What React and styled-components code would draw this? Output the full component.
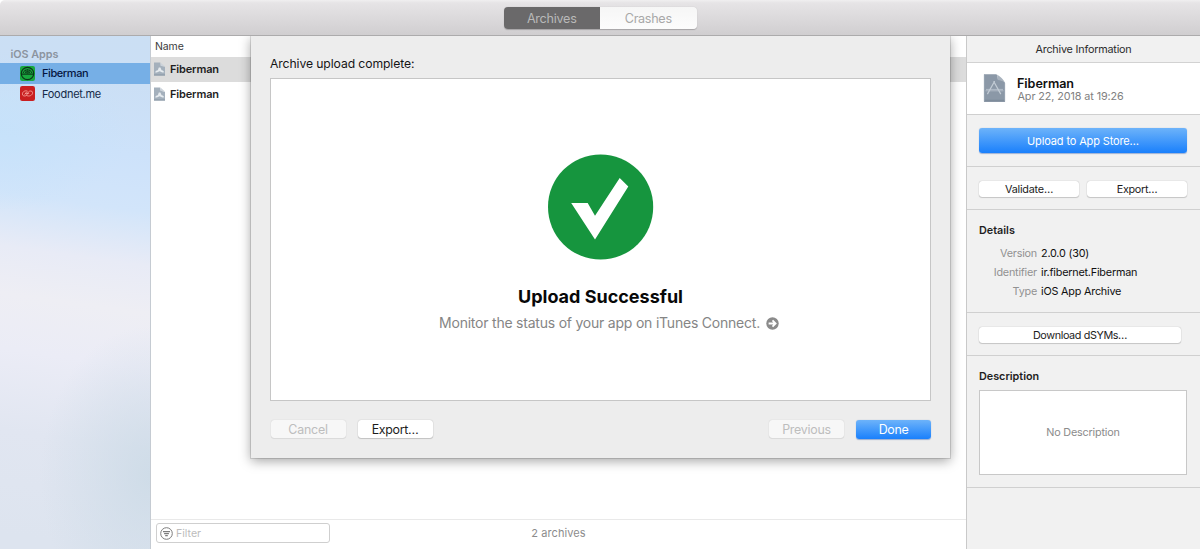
import React from "react";
import styled, { createGlobalStyle, css } from "styled-components";

const GlobalStyle = createGlobalStyle`
  * { box-sizing: border-box; }
  body {
    margin: 0;
    font-family: Inter, "Liberation Sans", sans-serif;
    font-size: 11px;
    color: #1e1e1e;
    overflow: hidden;
  }
  button, input { font-family: inherit; margin: 0; }
`;

const Window = styled.div`
  position: relative;
  width: 1200px;
  height: 549px;
  display: flex;
  flex-direction: column;
  background: #fff;
  overflow: hidden;
`;

const Toolbar = styled.header`
  height: 36px;
  flex: none;
  display: flex;
  justify-content: center;
  padding-top: 7px;
  background: linear-gradient(#f0eff0 0, #e6e4e6 3px, #d0ced0 100%);
  border-bottom: 1px solid #acabac;
  border-top-left-radius: 5px;
`;

const Segments = styled.div`
  display: flex;
  width: 193px;
  height: 22px;
  border-radius: 4px;
  overflow: hidden;
  box-shadow: 0 0.5px 1px rgba(0, 0, 0, 0.22);
`;

const Segment = styled.button`
  flex: 1;
  border: 0;
  padding: 0;
  font-size: 12.6px;
  letter-spacing: ${(p) => p.$spacing || 0}px;
  color: ${(p) => (p.$active ? "#b9b9b9" : "#a8a8a8")};
  background: ${(p) => (p.$active ? "#6a696a" : "linear-gradient(#f6f6f6, #fcfcfc)")};
`;

const Body = styled.div`
  flex: 1;
  display: flex;
  min-height: 0;
`;

const Sidebar = styled.aside`
  width: 151px;
  flex: none;
  padding-top: 11px;
  border-right: 1px solid #c5cbd2;
  background:
    radial-gradient(ellipse 110px 150px at 150px 440px, rgba(205, 219, 231, 0.9), rgba(205, 219, 231, 0) 100%),
    radial-gradient(ellipse 130px 80px at 0 95px, rgba(196, 226, 250, 0.75), rgba(196, 226, 250, 0) 100%),
    linear-gradient(188deg, #cbdff4 0, #cbdff5 50px, #cde2fa 120px, #d2e5fa 175px, #e8ebf6 228px, #eeeef4 275px, #ebecf6 330px, #e1e6f1 410px, #dde4ef 513px);
`;

const GroupTitle = styled.div`
  height: 16px;
  padding-left: 10.5px;
  line-height: 15px;
  font-size: 10.8px;
  font-weight: 600;
  letter-spacing: -0.02px;
  color: #8b949f;
`;

const AppItem = styled.div`
  height: 20.5px;
  display: flex;
  align-items: center;
  gap: 7px;
  padding-left: 20px;
  font-size: 11px;
  letter-spacing: ${(p) => p.$spacing || 0}px;
  font-weight: ${(p) => (p.$selected ? 500 : 400)};
  color: ${(p) => (p.$selected ? "#05153f" : "#152a49")};
  background: ${(p) => (p.$selected ? "#76afe6" : "transparent")};
  svg { flex: none; }
`;

const Archives = styled.main`
  flex: 1;
  display: flex;
  flex-direction: column;
  min-width: 0;
`;

const ColumnHeader = styled.div`
  height: 21px;
  padding-left: 4px;
  line-height: 21px;
  font-size: 10.5px;
  letter-spacing: -0.1px;
  color: #3c3c3c;
`;

const ArchiveRow = styled.div`
  height: 24.5px;
  display: flex;
  align-items: center;
  gap: 5px;
  padding-left: 3px;
  font-size: 11px;
  font-weight: 600;
  letter-spacing: -0.15px;
  background: ${(p) => (p.$selected ? "#dcdcdc" : "#fff")};
  svg { flex: none; }
`;

const Footer = styled.footer`
  margin-top: auto;
  height: 30px;
  border-top: 1px solid #e9e9e9;
  padding: 3px 5px 0;
  display: grid;
  grid-template-columns: 174px 1fr 174px;
`;

const FilterField = styled.label`
  height: 20px;
  display: flex;
  align-items: center;
  gap: 3px;
  padding-left: 3px;
  border: 1px solid #cfcfcf;
  border-radius: 3px;
  font-size: 10.6px;
  color: #bcbcbc;
`;

const Count = styled.span`
  text-align: center;
  line-height: 21px;
  font-size: 11px;
  letter-spacing: 0.1px;
  color: #8c8c8c;
`;

const Inspector = styled.aside`
  width: 234px;
  flex: none;
  border-left: 1px solid #c9c9c9;
  background: #f1f1f1;
`;

const PanelTitle = styled.div`
  height: 27px;
  border-bottom: 1px solid #d2d2d2;
  text-align: center;
  line-height: 27px;
  font-size: 10.8px;
  letter-spacing: -0.2px;
  color: #2c2c2c;
`;

const Summary = styled.section`
  height: 52px;
  display: flex;
  align-items: center;
  gap: 11px;
  padding: 0 16px;
  background: #fff;
  border-bottom: 1px solid #cfcfcf;
`;

const SummaryText = styled.div`
  padding-top: 2px;
`;

const SummaryName = styled.div`
  font-size: 12.6px;
  font-weight: 600;
  line-height: 13px;
  letter-spacing: -0.05px;
  color: #111;
`;

const SummaryDate = styled.div`
  padding-left: 0.5px;
  font-size: 10.8px;
  line-height: 13px;
  letter-spacing: -0.09px;
  color: #808080;
`;

const Section = styled.section`
  height: ${(p) => p.$height}px;
  padding: ${(p) => p.$top}px 12px 0;
  border-bottom: 1px solid #d0d0d0;
`;

const ButtonPair = styled.div`
  display: flex;
  gap: 8px;
`;

const blue = css`
  color: #fff;
  background: linear-gradient(#6db3fa, #1a80fc);
  box-shadow: 0 0.5px 1px rgba(0, 60, 160, 0.35);
`;

const PushButton = styled.button`
  flex: none;
  width: ${(p) => p.$width}px;
  height: ${(p) => p.$height || 16}px;
  padding: ${(p) => p.$shift || 0}px 0 0;
  border: 0;
  border-radius: 3px;
  font-size: ${(p) => p.$size || 10.8}px;
  line-height: ${(p) => (p.$height || 16) - (p.$shift || 0)}px;
  letter-spacing: ${(p) => p.$spacing || 0}px;
  color: #1c1c1c;
  background: #fff;
  box-shadow: 0 0 1px rgba(0, 0, 0, 0.35), 0 1px 1px rgba(0, 0, 0, 0.15);
  ${(p) => p.$primary && blue}
  &:disabled {
    color: #bdbdbd;
    background: #f7f7f7;
    box-shadow: 0 0 1px rgba(0, 0, 0, 0.22), 0 1px 1px rgba(0, 0, 0, 0.06);
  }
`;

const SectionTitle = styled.h3`
  margin: 0;
  font-size: 10.8px;
  line-height: 14px;
  font-weight: 600;
`;

const Facts = styled.dl`
  margin: 6px 0 0;
  display: grid;
  grid-template-columns: 58px 1fr;
  column-gap: 4px;
  grid-auto-rows: 19px;
  line-height: 19px;
  font-size: 10.8px;
  letter-spacing: -0.2px;
  dt { text-align: right; color: #929292; }
  dd { margin: 0; color: #101010; }
`;

const DescriptionBox = styled.div`
  margin-top: 6px;
  height: 85px;
  width: 208px;
  display: flex;
  align-items: center;
  justify-content: center;
  background: #fff;
  border: 1px solid #c8c8c8;
  font-size: 10.8px;
  letter-spacing: -0.18px;
  color: #8b8b8b;
`;

const Sheet = styled.div`
  position: absolute;
  left: 251px;
  top: 36px;
  width: 699px;
  height: 422px;
  padding: 18px 19px 0;
  background: #ededed;
  box-shadow: 0 0 0 1px rgba(0, 0, 0, 0.12), 0 3px 11px rgba(0, 0, 0, 0.36);
  clip-path: inset(0 -24px -30px -24px);
`;

const SheetTitle = styled.div`
  height: 24px;
  line-height: 19px;
  font-size: 12.2px;
  letter-spacing: -0.1px;
  color: #151515;
`;

const Result = styled.div`
  height: 323px;
  display: flex;
  flex-direction: column;
  align-items: center;
  padding-top: 75px;
  border: 1px solid #c6c6c6;
  background: #fff;
`;

const ResultTitle = styled.h1`
  margin: 23px 0 0;
  font-size: 18px;
  line-height: 27px;
  font-weight: 650;
  color: #080808;
`;

const ResultLink = styled.p`
  margin: 3px 0 0;
  padding-left: 17px;
  display: flex;
  align-items: center;
  gap: 6px;
  font-size: 14px;
  line-height: 20px;
  letter-spacing: -0.22px;
  color: #858585;
`;

const SheetActions = styled.div`
  display: flex;
  gap: 12px;
  padding: 19px 0 0 0.5px;
`;

const Spacer = styled.div`
  flex: 1;
`;

const FibermanIcon = () => (
  <svg width="15" height="15" viewBox="0 0 15 15" fill="none">
    <rect width="15" height="15" rx="2.2" fill="#18a83e" />
    <circle cx="7.5" cy="7.5" r="6.2" stroke="#0b3518" strokeWidth="1.2" />
    <path d="M1.8 8.2h11.4" stroke="#0b3518" strokeWidth="1" />
    <path d="M3 7.4a4.6 4.6 0 0 1 9 0M4.9 7.6a2.7 2.7 0 0 1 5.2 0" stroke="#0b3518" strokeWidth=".9" />
    <path d="M7.5 3v5M5.3 3.6l1.2 4M9.7 3.6l-1.2 4" stroke="#0b3518" strokeWidth=".6" />
  </svg>
);

const FoodnetIcon = () => (
  <svg width="15" height="15" viewBox="0 0 15 15" fill="none">
    <rect width="15" height="15" rx="2.2" fill="#c91f20" />
    <g stroke="#f7a8a0" strokeWidth=".8">
      <path d="M7.6 5.2C5.5 4 2.4 5.6 2.4 8c0 2.2 2.6 2.6 4.2 1.3" />
      <path d="M7 9.6c2.2 1.2 5.6-.4 5.6-2.8 0-2.2-3-2.4-4.3-.7L6.2 9.8" />
      <path d="M4.6 8.6 6.9 5.6M5.2 7.4h4" />
    </g>
  </svg>
);

const SmallArchiveIcon = () => (
  <svg width="11" height="14" viewBox="0 0 11 14">
    <path d="M0 .5h6.3l.4 3.2 4.3 1V13.5H0z" fill="#a4b0bc" />
    <path d="M6.7.8 10.7 4.3 6.9 3.9z" fill="#ccd3da" />
    <path d="M.8 10.3 2.6 8.6l1.2-.4 1-2.7h1.6l1.2 2.7 1.2.4 1.6 1.7-2 .2-2.8-1.3-2.8 1.3z" fill="#e6ebef" />
    <path d="M0 12.5h11v1H0z" fill="#8997a5" />
  </svg>
);

const ArchiveIcon = () => (
  <svg width="23" height="29" viewBox="0 0 23 29" fill="none">
    <path d="M1 .3h12.4c1.5 1.3 1.2 4 1.6 5.2 2 .4 6 .8 7 3.2v19H1z" fill="#8b98a7" />
    <path d="M13.4.3c4 2.1 7 5 8.6 8.6C20 6.3 17 6.3 14.8 5.9 14.3 3.5 14.8 1.5 13.4.3z" fill="#a9b3be" />
    <path d="M1 25.7h21v2H1z" fill="#7e8c9b" />
    <path d="M1.3.5v27M21.7 9v18.5" stroke="#a1acb8" strokeWidth=".7" />
    <g stroke="#c3ccd5" strokeWidth="1.2">
      <path d="M4.4 20.1 11.6 7.3M10.6 7.3l7.2 12.8" />
      <path d="M2.5 16.8h18M3 15.4h17" strokeWidth=".7" />
    </g>
  </svg>
);

const CheckBadge = () => (
  <svg width="106" height="106" viewBox="0 0 106 106">
    <circle cx="52.6" cy="53" r="52.6" fill="#16953e" />
    <path d="M23.2 49h16.5L47 61.7 71.7 24l8.6 8.6L47 85.4z" fill="#fff" />
  </svg>
);

const ArrowBadge = () => (
  <svg width="13" height="13" viewBox="0 0 13 13" fill="none">
    <circle cx="6.5" cy="6.5" r="6.2" fill="#8b8b8b" />
    <path d="M2.6 6.5h6.5M6.5 3.3l3.1 3.2-3.1 3.2" stroke="#fff" strokeWidth="1.8" />
  </svg>
);

const FilterIcon = () => (
  <svg width="13" height="13" viewBox="0 0 13 13" fill="none" stroke="#7c7c7c">
    <circle cx="6.5" cy="6.5" r="5.8" strokeWidth="1" />
    <path d="M3 4.6h7M4.1 6.6h4.8M5.2 8.6h2.6" strokeWidth="1.1" />
  </svg>
);

const facts = [
  ["Version", "2.0.0 (30)"],
  ["Identifier", "ir.fibernet.Fiberman"],
  ["Type", "iOS App Archive"],
];

export default function App() {
  return (
    <Window>
      <GlobalStyle />
      <Toolbar>
        <Segments>
          <Segment $active $spacing={-0.25}>Archives</Segment>
          <Segment $spacing={-0.3}>Crashes</Segment>
        </Segments>
      </Toolbar>
      <Body>
        <Sidebar>
          <GroupTitle>iOS Apps</GroupTitle>
          <AppItem $selected $spacing={-0.42}><FibermanIcon />Fiberman</AppItem>
          <AppItem $spacing={-0.27}><FoodnetIcon />Foodnet.me</AppItem>
        </Sidebar>
        <Archives>
          <ColumnHeader>Name</ColumnHeader>
          <ArchiveRow $selected><SmallArchiveIcon />Fiberman</ArchiveRow>
          <ArchiveRow><SmallArchiveIcon />Fiberman</ArchiveRow>
          <Footer>
            <FilterField><FilterIcon />Filter</FilterField>
            <Count>2 archives</Count>
          </Footer>
        </Archives>
        <Inspector>
          <PanelTitle>Archive Information</PanelTitle>
          <Summary>
            <ArchiveIcon />
            <SummaryText>
              <SummaryName>Fiberman</SummaryName>
              <SummaryDate>Apr 22, 2018 at 19:26</SummaryDate>
            </SummaryText>
          </Summary>
          <Section $height={52} $top={13}>
            <PushButton $primary $width={208} $height={25} $shift={1} $size={11} $spacing={-0.14}>Upload to App Store…</PushButton>
          </Section>
          <Section $height={43} $top={14}>
            <ButtonPair>
              <PushButton $width={100} $shift={1} $spacing={-0.2}>Validate…</PushButton>
              <PushButton $width={100} $shift={1} $spacing={-0.3}>Export…</PushButton>
            </ButtonPair>
          </Section>
          <Section $height={103} $top={14}>
            <SectionTitle>Details</SectionTitle>
            <Facts>
              {facts.map(([label, value]) => (
                <React.Fragment key={label}>
                  <dt>{label}</dt>
                  <dd>{value}</dd>
                </React.Fragment>
              ))}
            </Facts>
          </Section>
          <Section $height={43} $top={14}>
            <ButtonPair>
              <PushButton $width={202} $shift={1} $spacing={-0.38}>Download dSYMs…</PushButton>
            </ButtonPair>
          </Section>
          <Section $height={132} $top={14}>
            <SectionTitle>Description</SectionTitle>
            <DescriptionBox>No Description</DescriptionBox>
          </Section>
        </Inspector>
      </Body>
      <Sheet>
        <SheetTitle>Archive upload complete:</SheetTitle>
        <Result>
          <CheckBadge />
          <ResultTitle>Upload Successful</ResultTitle>
          <ResultLink>Monitor the status of your app on iTunes Connect.<ArrowBadge /></ResultLink>
        </Result>
        <SheetActions>
          <PushButton disabled $width={75} $height={18} $shift={1} $size={12.4} $spacing={-0.2}>Cancel</PushButton>
          <PushButton $width={75} $height={18} $shift={1} $size={12.4} $spacing={-0.3}>Export…</PushButton>
          <Spacer />
          <PushButton disabled $width={75} $height={18} $shift={1} $size={12.4} $spacing={-0.25}>Previous</PushButton>
          <PushButton $primary $width={75} $height={19} $size={12.4} $spacing={-0.3}>Done</PushButton>
        </SheetActions>
      </Sheet>
    </Window>
  );
}
